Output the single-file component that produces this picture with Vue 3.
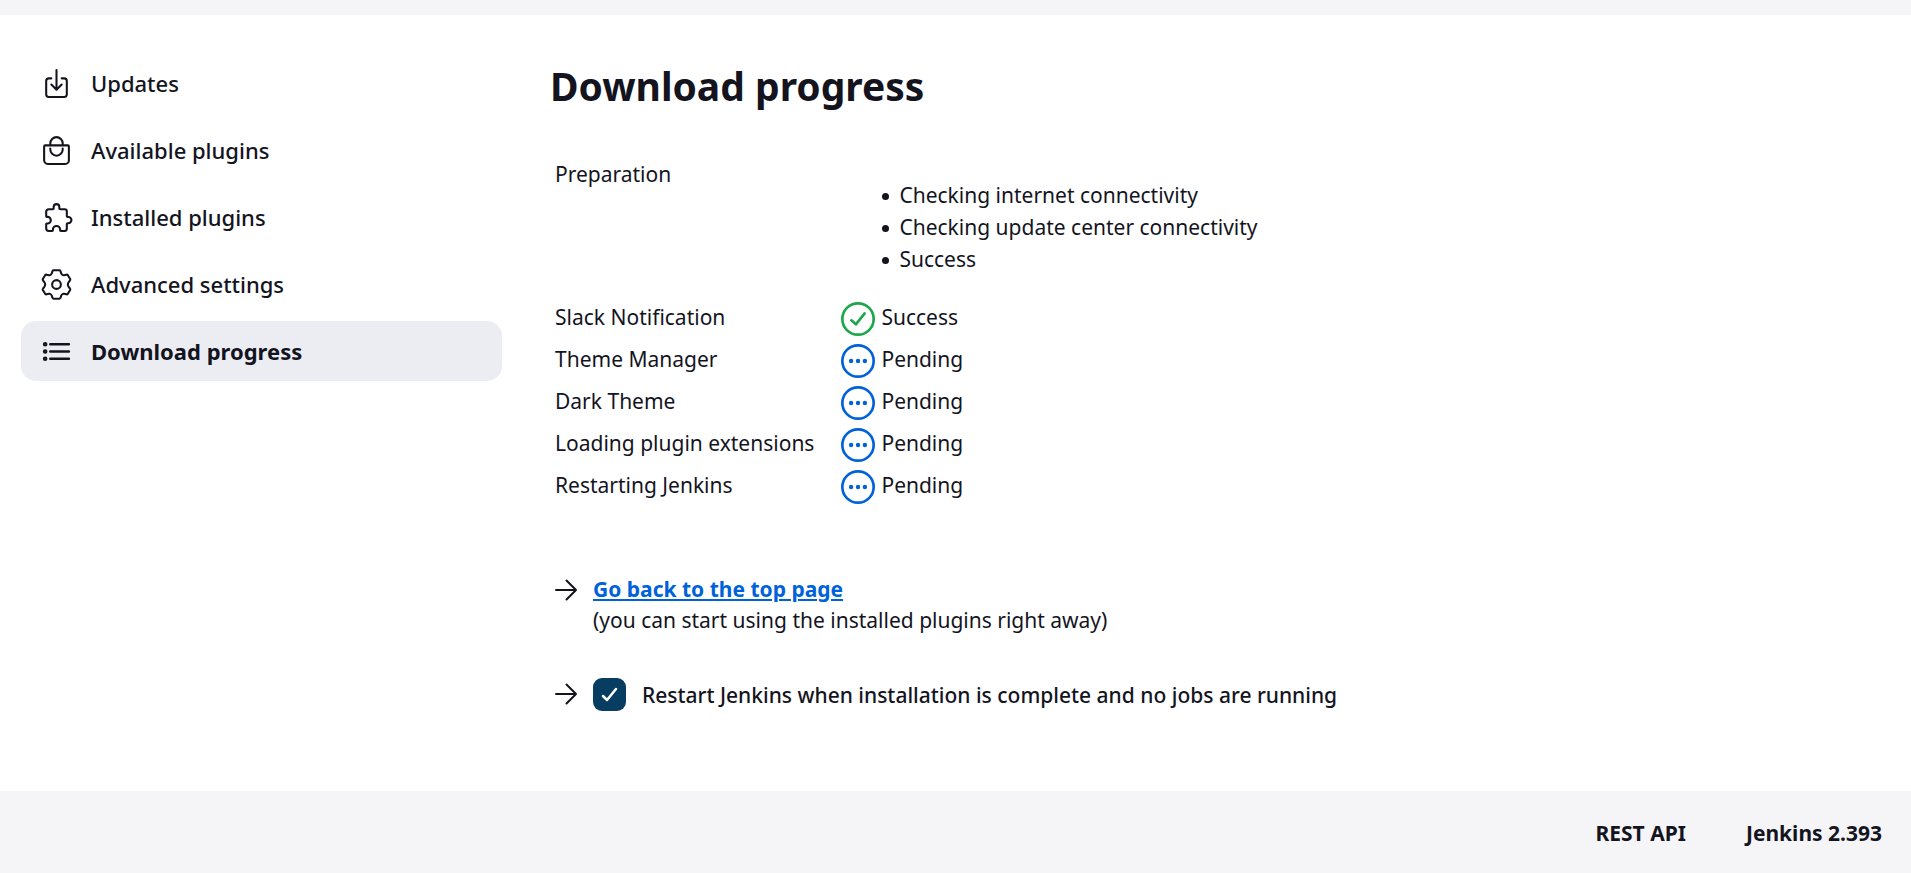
<script setup>
const nav = [
  { label: 'Updates', icon: 'download' },
  { label: 'Available plugins', icon: 'bag' },
  { label: 'Installed plugins', icon: 'puzzle' },
  { label: 'Advanced settings', icon: 'gear' },
  { label: 'Download progress', icon: 'list', active: true },
]
const preparation = ['Checking internet connectivity', 'Checking update center connectivity', 'Success']
const jobs = [
  { name: 'Slack Notification', status: 'Success' },
  { name: 'Theme Manager', status: 'Pending' },
  { name: 'Dark Theme', status: 'Pending' },
  { name: 'Loading plugin extensions', status: 'Pending' },
  { name: 'Restarting Jenkins', status: 'Pending' },
]
</script>

<template>
  <div class="page">
    <header class="strip"></header>
    <div class="body">
      <nav class="side" aria-label="Plugin manager">
        <a v-for="item in nav" :key="item.label" href="#" class="task" :class="{ active: item.active }">
          <svg class="task-icon" viewBox="0 0 512 512" aria-hidden="true">
            <template v-if="item.icon === 'download'">
              <path d="M336 176h40a40 40 0 0140 40v208a40 40 0 01-40 40H136a40 40 0 01-40-40V216a40 40 0 0140-40h40" />
              <path d="M176 272l80 80 80-80M256 48v288" />
            </template>
            <template v-else-if="item.icon === 'bag'">
              <path d="M80 176a16 16 0 00-16 16v216c0 30.24 25.76 56 56 56h272c30.24 0 56-24.51 56-54.75V192a16 16 0 00-16-16zM160 176v-32a96 96 0 01192 0v32M160 224v16a96 96 0 00192 0v-16" />
            </template>
            <path v-else-if="item.icon === 'puzzle'" d="M136 128H200Q212 128 212 116V92a44 44 0 0188 0V116Q300 128 312 128H384Q416 128 416 160V232Q416 248 430 248H440a48 48 0 010 96H430Q416 344 416 358V432Q416 464 384 464H324Q312 464 312 452V444a56 56 0 00-112 0V452Q200 464 188 464H136Q96 464 96 424V360Q96 350 106 350H116a52 52 0 000-104H106Q96 246 96 236V168Q96 128 136 128z" />
            <template v-else-if="item.icon === 'gear'">
              <circle cx="256" cy="256" r="68" />
              <path d="M212 34H300Q312 34 316 46L330 84Q336 98 346 105Q358 114 372 112L410 104Q424 101 432 112L468 170Q474 182 466 192L442 224Q432 240 432 256Q432 272 442 288L466 320Q474 330 468 342L432 400Q424 411 410 408L372 400Q358 398 346 407Q336 414 330 428L316 466Q312 478 300 478H212Q200 478 196 466L182 428Q176 414 166 407Q154 398 140 400L102 408Q88 411 80 400L44 342Q38 330 46 320L70 288Q80 272 80 256Q80 240 70 224L46 192Q38 182 44 170L80 112Q88 101 102 104L140 112Q154 114 166 105Q176 98 182 84L196 46Q200 34 212 34z" />
            </template>
            <g v-else class="heavy">
              <path d="M160 144h288M160 256h288M160 368h288" />
              <circle cx="80" cy="144" r="16" /><circle cx="80" cy="256" r="16" /><circle cx="80" cy="368" r="16" />
            </g>
          </svg>
          <span>{{ item.label }}</span>
        </a>
      </nav>

      <main class="main">
        <h1>Download progress</h1>
        <table class="jobs">
          <tbody>
            <tr>
              <td>Preparation</td>
              <td>
                <ul>
                  <li v-for="step in preparation" :key="step">{{ step }}</li>
                </ul>
              </td>
            </tr>
            <tr v-for="job in jobs" :key="job.name">
              <td>{{ job.name }}</td>
              <td>
                <div class="status">
                  <svg class="status-icon" :class="job.status.toLowerCase()" viewBox="0 0 512 512" aria-hidden="true">
                    <circle cx="256" cy="256" r="236" />
                    <path v-if="job.status === 'Success'" d="M356 172L224 336l-68-60" />
                    <g v-else class="dots">
                      <circle cx="152" cy="256" r="33" /><circle cx="256" cy="256" r="33" /><circle cx="360" cy="256" r="33" />
                    </g>
                  </svg>
                  <span>{{ job.status }}</span>
                </div>
              </td>
            </tr>
          </tbody>
        </table>

        <div class="next">
          <svg class="arrow" viewBox="0 0 24 24" aria-hidden="true"><path d="M2 12h20M12.500 2.500L22 12l-9.500 9.500" /></svg>
          <div>
            <a href="#" class="back">Go back to the top page</a>
            <p>(you can start using the installed plugins right away)</p>
          </div>
        </div>
        <div class="next restart">
          <svg class="arrow" viewBox="0 0 24 24" aria-hidden="true"><path d="M2 12h20M12.500 2.500L22 12l-9.500 9.500" /></svg>
          <label class="check">
            <span class="box">
              <input type="checkbox" checked />
              <svg viewBox="0 0 33 33" aria-hidden="true"><path stroke-width="2.500" d="M10 18l4 4 9-11" /></svg>
            </span>
            <span>Restart Jenkins when installation is complete and no jobs are running</span>
          </label>
        </div>
      </main>
    </div>
    <footer class="footer">
      <a href="#">REST API</a>
      <a href="#">Jenkins 2.393</a>
    </footer>
  </div>
</template>

<style>
body {
  margin: 0;
  background: #fff;
}
</style>

<style scoped>
.page {
  min-height: 100vh;
  display: flex;
  flex-direction: column;
  font-family: "Noto Sans", sans-serif;
  font-size: 21px;
  line-height: 32px;
  color: #14141f;
}
.strip {
  height: 15px;
  background: #f5f5f8;
}
.body {
  flex: 1;
  display: flex;
  gap: 48px;
  padding: 38px 36px 0 21px;
}
.side {
  flex: none;
  width: 481px;
  display: flex;
  flex-direction: column;
  gap: 7px;
}
.task {
  height: 60px;
  display: flex;
  align-items: center;
  gap: 18px;
  padding: 0 19px;
  border-radius: 15px;
  color: inherit;
  font-size: 22px;
  font-weight: 500;
  text-decoration: none;
}
.task.active {
  background: #ecedf3;
  font-weight: 700;
}
.task-icon {
  width: 33px;
  height: 33px;
  fill: none;
  stroke: currentColor;
  stroke-width: 32px;
  stroke-linecap: round;
  stroke-linejoin: round;
}
.heavy {
  stroke-width: 40px;
}
.main {
  flex: 1;
  min-width: 0;
}
h1 {
  margin: 3px 0 0;
  font-size: 39px;
  line-height: 60px;
  font-weight: 700;
}
.jobs {
  margin-top: 37px;
  border-spacing: 3px;
}
.jobs td {
  padding: 2px;
  vertical-align: top;
}
.jobs td:first-child {
  padding-right: 22px;
}
ul {
  margin: 21px 0 19px;
  padding-left: 41px;
  list-style: none;
}
li {
  display: flex;
  align-items: center;
  gap: 10px;
}
li::before {
  content: "";
  width: 7px;
  height: 7px;
  margin-top: 3px;
  border-radius: 50%;
  background: currentColor;
}
.status {
  display: flex;
  gap: 6px;
}
.status-icon {
  width: 34px;
  height: 34px;
  margin-top: 1px;
  fill: none;
  stroke: currentColor;
  stroke-width: 40px;
  stroke-linecap: round;
  stroke-linejoin: round;
}
.success {
  color: #1ea64b;
}
.pending {
  color: #0062d9;
}
.dots {
  fill: currentColor;
  stroke: none;
}
.next {
  display: flex;
  gap: 15px;
  margin-top: 65px;
  padding-left: 4px;
  line-height: 31px;
}
.restart {
  margin-top: 42px;
  line-height: 34px;
}
.arrow {
  width: 24px;
  height: 32px;
  fill: none;
  stroke: currentColor;
  stroke-width: 2px;
  stroke-linecap: round;
  stroke-linejoin: round;
}
.back {
  color: #0062d9;
  font-weight: 700;
}
p {
  margin: 0;
}
.check {
  display: flex;
  gap: 16px;
  font-weight: 500;
}
.box {
  display: grid;
  width: 33px;
  height: 33px;
}
.box > * {
  grid-area: 1 / 1;
}
.box input {
  appearance: none;
  margin: 0;
  border-radius: 9px;
  background: #073d60;
}
.box svg {
  fill: none;
  stroke: #fff;
  stroke-linecap: round;
  stroke-linejoin: round;
  pointer-events: none;
}
.footer {
  display: flex;
  justify-content: flex-end;
  gap: 60px;
  padding: 26px 29px 24px;
  background: #f5f5f8;
  font-weight: 700;
}
.footer a {
  color: inherit;
  text-decoration: none;
}
</style>
